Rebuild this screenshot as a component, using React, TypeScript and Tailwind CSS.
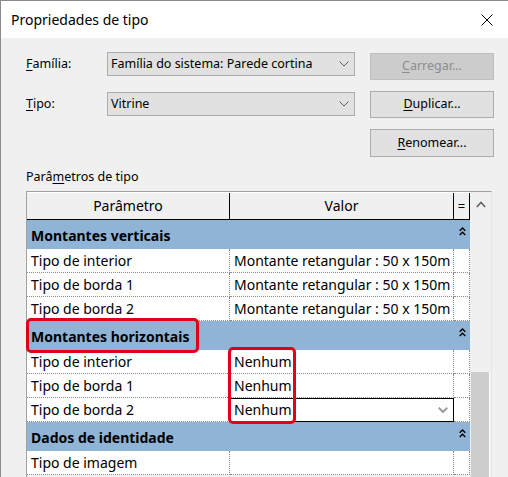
import React from 'react';

const CloseIcon = () => (
  <svg width="12" height="12" viewBox="0 0 12 12" className="block">
    <path d="M0.5 0.5 L11.5 11.5 M11.5 0.5 L0.5 11.5" stroke="#000" strokeWidth="1" fill="none" />
  </svg>
);

const ComboChevron = () => (
  <svg width="10" height="6" viewBox="0 0 10 6" className="block">
    <polyline points="0.5,0.5 5,5 9.5,0.5" stroke="#606060" strokeWidth="1" fill="none" />
  </svg>
);

const ScrollUp = () => (
  <svg width="10" height="7" viewBox="0 0 10 7" className="block">
    <polyline points="0.8,6 5,1.5 9.2,6" stroke="#606060" strokeWidth="1.6" fill="none" />
  </svg>
);

const DoubleUp = () => (
  <svg width="7" height="9" viewBox="0 0 7 9" className="block">
    <polyline points="0.7,3.8 3.5,1 6.3,3.8" stroke="#000" strokeWidth="1.4" fill="none" />
    <polyline points="0.7,8 3.5,5.2 6.3,8" stroke="#000" strokeWidth="1.4" fill="none" />
  </svg>
);

const EditChevron = () => (
  <svg width="10" height="6" viewBox="0 0 10 6" className="block">
    <polyline points="0.8,0.8 5,5 9.2,0.8" stroke="#9a9a9a" strokeWidth="2" fill="none" />
  </svg>
);

function Group({ title }: { title: string }) {
  return (
    <div className="flex h-[29px] bg-[#8fb4d6]">
      <div className="flex-1 pl-[4px] pt-[2px] flex items-center font-bold text-black">{title}</div>
      <div className="w-[16px] flex justify-center pt-[7px]">
        <DoubleUp />
      </div>
    </div>
  );
}

function Row({ name, value, editing }: { name: string; value: string; editing?: boolean }) {
  return (
    <div className="flex h-[24px] bg-white">
      <div className="w-[203px] border-r border-b border-dotted border-[#8c8c8c] pl-[4px] flex items-center">{name}</div>
      {editing ? (
        <div className="w-[224px] border border-solid border-black flex items-center justify-between pl-[3px] pr-[5px]">
          <span>{value}</span>
          <EditChevron />
        </div>
      ) : (
        <div className="w-[224px] border-r border-b border-dotted border-[#8c8c8c] pl-[4px] flex items-center">{value}</div>
      )}
      <div className="w-[16px] border-r border-b border-dotted border-[#8c8c8c]"></div>
    </div>
  );
}

export default function App() {
  const mont = 'Montante retangular : 50 x 150m';
  return (
    <div className="w-[508px] h-[477px] overflow-hidden bg-[#f0f0f0] border-l border-t border-[#8a8a8a] font-['Noto_Sans',sans-serif] text-[14px] text-black leading-none">
      {/* Title bar */}
      <div className="h-[37px] bg-white flex items-center justify-between pl-[10px] pr-[15px]">
        <span className="text-[14px]">Propriedades de tipo</span>
        <CloseIcon />
      </div>

      <div className="pl-[25px] pt-[14px] text-[12.5px]">
        {/* Família */}
        <div className="flex items-start">
          <div className="w-[81px] h-[24px] flex items-center">
            <span><span className="underline underline-offset-2">F</span>amília:</span>
          </div>
          <div className="w-[248px] h-[24px] bg-[#e1e1e1] border border-[#adadad] flex items-center justify-between pl-[3px] pr-[5px]">
            <span>Família do sistema: Parede cortina</span>
            <ComboChevron />
          </div>
          <div className="ml-[15px] mt-[1px] w-[124px] h-[27px] bg-[#cccccc] border border-[#bfbfbf] flex items-center justify-center text-[#8d8d8d]">
            <span><span className="underline underline-offset-2">C</span>arregar...</span>
          </div>
        </div>

        {/* Tipo */}
        <div className="flex items-start mt-[11px]">
          <div className="w-[81px] h-[24px] mt-[1px] flex items-center">
            <span><span className="underline underline-offset-2">T</span>ipo:</span>
          </div>
          <div className="w-[248px] h-[24px] mt-[1px] bg-[#e1e1e1] border border-[#adadad] flex items-center justify-between pl-[3px] pr-[5px]">
            <span>Vitrine</span>
            <ComboChevron />
          </div>
          <div className="ml-[15px] w-[124px] h-[27px] bg-[#e1e1e1] border border-[#adadad] flex items-center justify-center">
            <span><span className="underline underline-offset-2">D</span>uplicar...</span>
          </div>
        </div>

        {/* Renomear */}
        <div className="flex mt-[11px]">
          <div className="ml-[344px] w-[124px] h-[28px] bg-[#e1e1e1] border border-[#adadad] flex items-center justify-center">
            <span><span className="underline underline-offset-2">R</span>enomear...</span>
          </div>
        </div>

        <div className="mt-[10px] h-[20px] flex items-center">
          <span>Parâ<span className="underline underline-offset-2">m</span>etros de tipo</span>
        </div>

        {/* Grid */}
        <div className="relative mt-[4px] w-[466px] h-[300px] border-l border-t border-[#a0a0a0] border-r border-r-[#e6e6e6] flex text-[14px]">
          <div className="w-[443px] flex flex-col">
            {/* Header */}
            <div className="flex h-[28px] bg-[#f0f0f0] border-b border-black border-t border-t-white">
              <div className="w-[203px] border-r border-black flex items-center justify-center">Parâmetro</div>
              <div className="w-[224px] border-r border-black flex items-center justify-center">Valor</div>
              <div className="w-[16px] border-r border-black flex items-center justify-center text-[13px]">=</div>
            </div>
            <Group title="Montantes verticais" />
            <Row name="Tipo de interior" value={mont} />
            <Row name="Tipo de borda 1" value={mont} />
            <Row name="Tipo de borda 2" value={mont} />
            <Group title="Montantes horizontais" />
            <Row name="Tipo de interior" value="Nenhum" />
            <Row name="Tipo de borda 1" value="Nenhum" />
            <Row name="Tipo de borda 2" value="Nenhum" editing />
            <Group title="Dados de identidade" />
            <Row name="Tipo de imagem" value="" />
          </div>

          {/* Scrollbar */}
          <div className="w-[21px] flex flex-col">
            <div className="h-[180px] flex justify-center pt-[9px]">
              <ScrollUp />
            </div>
            <div className="flex-1 ml-[1px] mr-[1px] bg-[#cdcdcd] border-r border-white"></div>
          </div>

          {/* Highlight boxes */}
          <div className="absolute left-[-1px] top-[126px] w-[173px] h-[35px] border-[3px] border-[#e0001a] rounded-[5px]"></div>
          <div className="absolute left-[201px] top-[155px] w-[68px] h-[77px] border-[3px] border-[#e0001a] rounded-[5px]"></div>
        </div>
      </div>
    </div>
  );
}
